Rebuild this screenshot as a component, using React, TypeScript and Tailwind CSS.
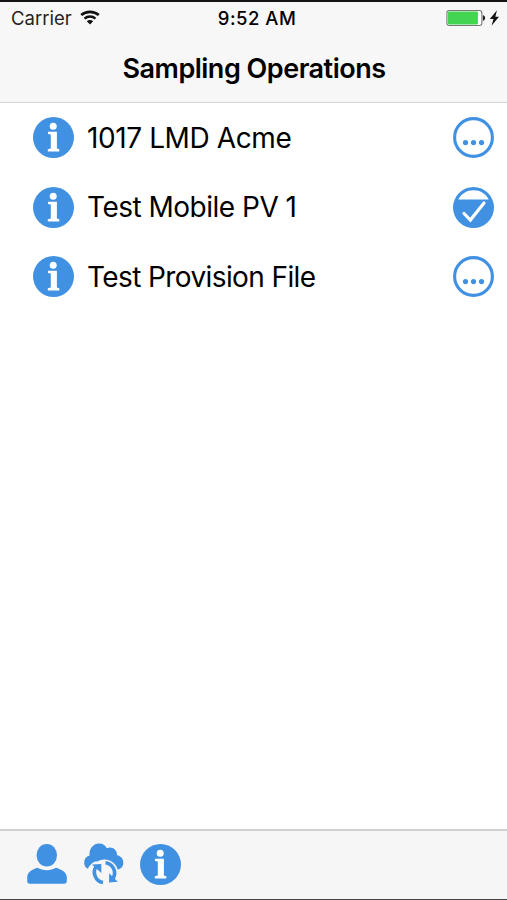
const operations = [
  { id: 1, name: '1017 LMD Acme', status: 'pending', tracking: 'tracking-[-0.4px]' },
  { id: 2, name: 'Test Mobile PV 1', status: 'done', tracking: 'tracking-[-0.5px]' },
  { id: 3, name: 'Test Provision File', status: 'pending', tracking: 'tracking-[-0.6px]' },
]

function InfoIcon() {
  return (
    <svg viewBox="0 0 41 41" className="size-[41px] shrink-0">
      <circle cx="20.5" cy="20.5" r="20.5" fill="#4191e3" />
      <circle cx="20.2" cy="9.2" r="3.5" fill="#fff" />
      <path d="M15 14.8h8.9v16.8l2.4.6v2.3H14.8v-2.3l3-.6V17.5l-2.8-.4z" fill="#fff" />
    </svg>
  )
}

function PendingIcon() {
  return (
    <svg viewBox="0 0 41 41" className="size-[41px] shrink-0">
      <circle cx="20.5" cy="20.5" r="18.9" fill="#fff" stroke="#4191e3" strokeWidth="3.1" />
      <g fill="#4191e3">
        <circle cx="12.5" cy="25.6" r="2.6" />
        <circle cx="20.5" cy="25.6" r="2.6" />
        <circle cx="28.5" cy="25.6" r="2.6" />
      </g>
    </svg>
  )
}

function DoneIcon() {
  return (
    <svg viewBox="0 0 41 41" className="size-[41px] shrink-0">
      <circle cx="20.5" cy="20.5" r="20.5" fill="#4191e3" />
      <path d="M5.3 12.5C8.2 6.5 14 3.2 20.5 3.2s12.3 3.3 15.2 9.3z" fill="#fff" />
      <path d="M11 26.5l6.4 6.5 13.6-17" fill="none" stroke="#fff" strokeWidth="3.2" strokeLinecap="round" />
    </svg>
  )
}

function UserIcon() {
  return (
    <svg viewBox="0 0 40 40" className="size-10 shrink-0" fill="#4191e3">
      <ellipse cx="19.8" cy="11.3" rx="10.2" ry="11.3" />
      <path d="M10.5 23.8c5.5 3.3 13 3.3 18.5 0 6.5 2.2 10.8 4.8 10.8 9.7V37c0 1.8-1 2.8-2.5 2.8H2.7C1.2 39.8.2 38.8.2 37v-3.5c0-4.9 3.8-7.5 10.3-9.7z" />
    </svg>
  )
}

function CloudSyncIcon() {
  return (
    <svg viewBox="0 0 40 42" className="h-[42px] w-10 shrink-0">
      <path
        d="M3 25.5C1.200 24 .2 22 .2 19.500c0-3.800 2-6.300 5.300-7.100C5 5.500 9.600.6 15 .6c3.700 0 6.300 1.800 7.800 4.600 5.400-2.100 10.400 1.400 10.200 7 4 .6 6.300 3.700 6.300 7.500 0 3.900-2.500 6.600-6 6.800z"
        fill="#4191e3"
      />
      <circle cx="20.5" cy="30" r="13.6" fill="#f6f6f6" />
      <path d="M4 25.5c1.500-3.800 4.500-6 8.500-7.500l2 5-6 9z" fill="#f6f6f6" />
      <g fill="none" stroke="#4191e3" strokeWidth="3.6">
        <path d="M19 39.500A10.400 10.400 0 0 1 12.500 23" />
        <path d="M21.500 19.700A10.400 10.400 0 0 1 29 35.500" />
      </g>
      <g fill="#4191e3">
        <path d="M8 21.500l9.300-.6v9z" />
        <path d="M33.800 38.800l-8.700.8v-9.300z" />
      </g>
    </svg>
  )
}

function WifiIcon() {
  return (
    <svg viewBox="0 0 20 16" className="h-4 w-5" fill="none" stroke="#111">
      <path d="M1.200 5C6.200.7 13.800.7 18.800 5" strokeWidth="2.7" />
      <path d="M4.500 8.600C7.600 5.800 12.400 5.800 15.500 8.600" strokeWidth="2.5" />
      <path d="M10 14.600L6.800 11.300c1.900-1.800 4.500-1.800 6.400 0z" fill="#111" stroke="none" />
    </svg>
  )
}

function BatteryIcon() {
  return (
    <svg viewBox="0 0 54 18" className="h-[18px] w-[54px]">
      <rect x=".9" y="1.5" width="35" height="15" rx="2.5" fill="#fff" stroke="#777" strokeWidth="1.1" />
      <rect x="1.9" y="2.5" width="30" height="13" rx="1.2" fill="#43d551" />
      <path d="M36.9 6.3c3 .5 3 5 0 5.5z" fill="#222" />
      <path d="M51 1.3l-7.2 8.7h3.7L45.5 16.7l7.5-8.900h-3.700z" fill="#111" />
    </svg>
  )
}

export default function App() {
  return (
    <div className="flex h-[900px] w-[507px] flex-col overflow-hidden border-t-2 border-b border-t-[#141214] border-b-[#444] bg-white font-['Inter',sans-serif] text-black">
      <header className="h-[101px] shrink-0 border-b border-[#d5d5d5] bg-[#f7f7f7]">
        <div className="grid h-8 grid-cols-3 items-center pr-[7px] pl-[11px] text-[18.5px]">
          <div className="flex items-center gap-2">
            <span className="pt-0.5 text-[#222]">Carrier</span>
            <WifiIcon />
          </div>
          <span className="pt-0.5 pl-[3px] text-center font-medium tracking-[0.5px] whitespace-nowrap">9:52 AM</span>
          <div className="flex justify-end">
            <BatteryIcon />
          </div>
        </div>
        <h1 className="pt-[15px] pl-px text-center text-[27px] leading-10 font-semibold tracking-[-0.5px]">
          Sampling Operations
        </h1>
      </header>

      <ul className="flex-1">
        {operations.map((operation) => (
          <li key={operation.id} className="flex h-[69.5px] items-center pr-[13px] pl-[32.5px]">
            <InfoIcon />
            <span className={`ml-[13.5px] flex-1 text-[28px] leading-10 whitespace-nowrap ${operation.tracking}`}>
              {operation.name}
            </span>
            {operation.status === 'done' ? <DoneIcon /> : <PendingIcon />}
          </li>
        ))}
      </ul>

      <footer className="flex h-[70px] shrink-0 items-center border-t-2 border-[#d0d0d0] bg-[#f6f6f6] pb-0.5 pl-[27px]">
        <UserIcon />
        <div className="mr-4 ml-[17px]">
          <CloudSyncIcon />
        </div>
        <InfoIcon />
      </footer>
    </div>
  )
}
